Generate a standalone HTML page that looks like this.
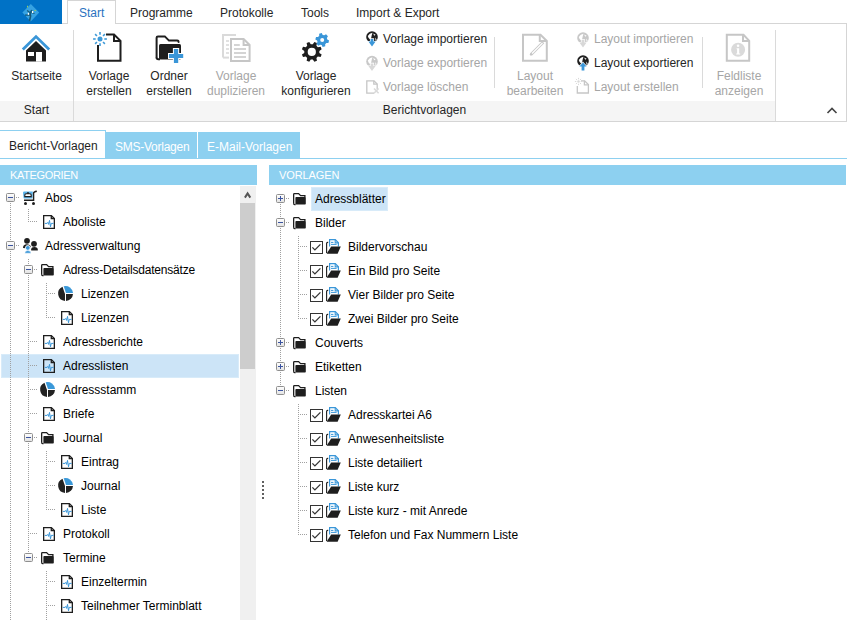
<!DOCTYPE html>
<html><head><meta charset="utf-8">
<style>
*{margin:0;padding:0;box-sizing:border-box}
html,body{width:847px;height:620px;overflow:hidden;background:#fff}
body{position:relative;font-family:"Liberation Sans",sans-serif;font-size:12px;color:#262626}
.a{position:absolute}
.t{position:absolute;white-space:nowrap;line-height:15px}
.c{text-align:center}
.dis{color:#a6a6a6}
svg{position:absolute;overflow:visible}
.band{position:absolute;background:#8dd0f0;color:#fff}
.vl{position:absolute;width:1px;background:#dadada}
</style></head><body>

<!-- logo -->
<div class="a" style="left:0;top:0;width:62px;height:24px;background:#0072c6;z-index:5"></div>
<svg style="left:0;top:0;z-index:6" width="62" height="24" viewBox="0 0 62 24">
  <path d="M30.8 4 L39.2 12.6 L30.8 21.4 L22.4 12.6 Z" fill="#36a2e2"/>
  <path d="M29.5 21 L30.6 16 L30 13.5 L31.8 10" stroke="#175a78" stroke-width="1.6" fill="none"/>
  <path d="M30.4 15 L25 15.2 M31 13.5 L27.2 10.5 M31.5 12.5 L34.5 13.5" stroke="#175a78" stroke-width="1.3" fill="none"/>
  <rect x="27.8" y="12.8" width="1.3" height="2" fill="#fff"/><rect x="32" y="11" width="1.3" height="2" fill="#fff"/>
  <rect x="27" y="5.8" width="1" height="1.6" fill="#9ccf5a"/><rect x="34.5" y="10" width="1.4" height="1" fill="#9ccf5a"/>
</svg>

<!-- tab row -->
<div class="a" style="left:67px;top:0px;width:49px;height:24px;border:1px solid #d5d5d5;border-bottom:none;background:#fff;z-index:2"></div>
<div class="t" style="left:79px;top:6px;color:#2a72c0;z-index:3">Start</div>
<div class="t" style="left:130px;top:6px">Programme</div>
<div class="t" style="left:220px;top:6px">Protokolle</div>
<div class="t" style="left:301px;top:6px">Tools</div>
<div class="t" style="left:356px;top:6px">Import &amp; Export</div>

<!-- ribbon box -->
<div class="a" style="left:0;top:23px;width:847px;height:99px;border-top:1px solid #d5d5d5;border-right:1px solid #d5d5d5;border-bottom:1px solid #d5d5d5;z-index:1"></div>
<div class="a" style="left:0;top:101px;width:775px;height:20px;background:#f5f5f5"></div>
<div class="vl" style="left:73px;top:30px;height:91px"></div>
<div class="vl" style="left:775px;top:30px;height:91px"></div>
<div class="vl" style="left:494px;top:37px;height:51px"></div>
<div class="vl" style="left:702px;top:37px;height:51px"></div>
<div class="t c" style="left:0;top:103px;width:73px">Start</div>
<div class="t c" style="left:74px;top:103px;width:701px">Berichtvorlagen</div>
<svg style="left:826px;top:106px" width="12" height="8" viewBox="0 0 12 8"><path d="M1.5 7 L6 2.5 L10.5 7" stroke="#444" stroke-width="1.6" fill="none"/></svg>

<!-- ribbon icons -->
<svg style="left:0;top:0;z-index:4" width="847" height="125" viewBox="0 0 847 125">
<path d="M22.8 49.5 L36 36.6 L49.2 49.5" fill="none" stroke="#3a96d8" stroke-width="2.8"/>
<path d="M26 50.6 L36 40.9 L46 50.6 V61.6 H26 Z" fill="#1e1e1e"/>
<rect x="28" y="52" width="6" height="4" fill="#fff"/><rect x="36" y="52" width="6" height="9.6" fill="#fff"/>
<path d="M98 45 V60.8 H120.5 V40.8 L114 34.5 H106" fill="none" stroke="#1e1e1e" stroke-width="2"/>
<path d="M114 34.5 V41 H120.5" fill="none" stroke="#1e1e1e" stroke-width="2"/>
<circle cx="100" cy="39" r="2.5" fill="#3d9ad9"/><path d="M104.30 39.00 L106.90 39.00" stroke="#3d9ad9" stroke-width="1.6"/><path d="M103.04 42.04 L104.88 43.88" stroke="#3d9ad9" stroke-width="1.6"/><path d="M100.00 43.30 L100.00 45.90" stroke="#3d9ad9" stroke-width="1.6"/><path d="M96.96 42.04 L95.12 43.88" stroke="#3d9ad9" stroke-width="1.6"/><path d="M95.70 39.00 L93.10 39.00" stroke="#3d9ad9" stroke-width="1.6"/><path d="M96.96 35.96 L95.12 34.12" stroke="#3d9ad9" stroke-width="1.6"/><path d="M100.00 34.70 L100.00 32.10" stroke="#3d9ad9" stroke-width="1.6"/><path d="M103.04 35.96 L104.88 34.12" stroke="#3d9ad9" stroke-width="1.6"/>
<path d="M156.6 57.5 V37.8 Q156.6 36.4 158 36.4 H164.8 L169 40.6 H177.2 Q178.6 40.6 178.6 42" fill="none" stroke="#1e1e1e" stroke-width="2" stroke-linecap="round"/>
<path d="M156.6 57.5 Q156.6 59.2 158.4 59.2 H160" fill="none" stroke="#1e1e1e" stroke-width="2"/>
<rect x="159" y="44" width="22" height="15.6" rx="1.5" fill="#1e1e1e"/>
<path d="M173.9 49 H178.2 V54 H183.2 V58 H178.2 V62.9 H173.9 V58 H169 V54 H173.9 Z" fill="#3a96d8" stroke="#fff" stroke-width="2" paint-order="stroke"/>
<path d="M223 57.6 V35 H236" fill="none" stroke="#dadada" stroke-width="2"/>
<path d="M223 57.6 H229" fill="none" stroke="#dadada" stroke-width="2"/>
<path d="M226 41 H229" stroke="#dadada" stroke-width="1.6"/>
<path d="M226 45 H229" stroke="#dadada" stroke-width="1.6"/>
<path d="M226 49 H229" stroke="#dadada" stroke-width="1.6"/>
<path d="M226 53 H229" stroke="#dadada" stroke-width="1.6"/>
<path d="M231 39 H243.6 L249.6 45 V61 H231 Z" fill="#fff" stroke="#c6c6c6" stroke-width="2"/>
<path d="M243.6 39 V45 H249.6" fill="none" stroke="#c6c6c6" stroke-width="2"/>
<path d="M234 45 H239.8 M234 49 H246 M234 53 H246 M234 57 H246" stroke="#c6c6c6" stroke-width="1.6"/>
<path d="M319.33 52.91 L321.68 54.45 L320.59 57.08 L317.84 56.52 L316.42 57.94 L316.98 60.69 L314.35 61.78 L312.81 59.43 L310.79 59.43 L309.25 61.78 L306.62 60.69 L307.18 57.94 L305.76 56.52 L303.01 57.08 L301.92 54.45 L304.27 52.91 L304.27 50.89 L301.92 49.35 L303.01 46.72 L305.76 47.28 L307.18 45.86 L306.62 43.11 L309.25 42.02 L310.79 44.37 L312.81 44.37 L314.35 42.02 L316.98 43.11 L316.42 45.86 L317.84 47.28 L320.59 46.72 L321.68 49.35 L319.33 50.89 Z M315.90 51.90 A4.1 4.1 0 1 0 307.70 51.90 A4.1 4.1 0 1 0 315.90 51.90 Z" fill="#1e1e1e" fill-rule="evenodd"/>
<path d="M319.23 35.85 L319.13 33.82 L321.77 33.11 L322.70 34.92 L324.30 35.35 L326.01 34.25 L327.95 36.19 L326.85 37.90 L327.28 39.50 L329.09 40.43 L328.38 43.07 L326.35 42.97 L325.17 44.15 L325.27 46.18 L322.63 46.89 L321.70 45.08 L320.10 44.65 L318.39 45.75 L316.45 43.81 L317.55 42.10 L317.12 40.50 L315.31 39.57 L316.02 36.93 L318.05 37.03 Z M324.20 40.00 A2.0 2.0 0 1 0 320.20 40.00 A2.0 2.0 0 1 0 324.20 40.00 Z" fill="#3a96d8" fill-rule="evenodd"/>
<circle cx="372" cy="37" r="5.8" fill="#1e1e1e"/><path d="M367.8 36 Q369.5 33.2 372.5 32.8 L371.8 35 Q371.2 38.5 370.5 39.8 Q368.2 38.5 367.8 36 Z" fill="#fff"/><path d="M373.2 33.4 L375.6 34.8 L374.2 35.8 Z" fill="#fff"/><path d="M375.2 37.5 L376.6 39.6 L375.6 41 Z" fill="#fff"/><path d="M370.6 39 H373.4 V41.6 H375.6 L372 46.6 L368.4 41.6 H370.6 Z" fill="#3a96d8" stroke="#fff" stroke-width="1.4" paint-order="stroke"/>
<circle cx="372" cy="61.5" r="5.8" fill="#c8c8c8"/><path d="M367.8 60.5 Q369.5 57.7 372.5 57.3 L371.8 59.5 Q371.2 63.0 370.5 64.3 Q368.2 63.0 367.8 60.5 Z" fill="#fff"/><path d="M373.2 57.9 L375.6 59.3 L374.2 60.3 Z" fill="#fff"/><path d="M375.2 62.0 L376.6 64.1 L375.6 65.5 Z" fill="#fff"/><path d="M370.6 63.5 H373.4 V66.1 H375.6 L372 71.1 L368.4 66.1 H370.6 Z" fill="#d8d8d8" stroke="#fff" stroke-width="1.4" paint-order="stroke"/>
<path d="M374 93.2 H366.8 V80.8 H374 L377.2 84 V89" fill="none" stroke="#c6c6c6" stroke-width="1.3"/>
<path d="M373.8 80.8 V84.2 H377.2" fill="none" stroke="#c6c6c6" stroke-width="1.3"/>
<path d="M374 88.5 L378.6 93.3 M378.6 88.5 L374 93.3" stroke="#dadada" stroke-width="1.6"/>
<path d="M523 34.8 H540.5 L546.8 41 V60.8 H523 Z" fill="#fff" stroke="#c6c6c6" stroke-width="2"/>
<path d="M539.8 34.8 V41 H546.8" fill="none" stroke="#c6c6c6" stroke-width="2"/>
<path d="M531 54.5 L543.2 42.3" stroke="#c6c6c6" stroke-width="3"/><path d="M532 53.5 L542.5 43" stroke="#fff" stroke-width="1.2"/><path d="M530.3 55.2 L531.6 53.9" stroke="#c6c6c6" stroke-width="2"/>
<circle cx="583" cy="38" r="5.8" fill="#c8c8c8"/><path d="M578.8 37 Q580.5 34.2 583.5 33.8 L582.8 36 Q582.2 39.5 581.5 40.8 Q579.2 39.5 578.8 37 Z" fill="#fff"/><path d="M584.2 34.4 L586.6 35.8 L585.2 36.8 Z" fill="#fff"/><path d="M586.2 38.5 L587.6 40.6 L586.6 42 Z" fill="#fff"/><path d="M581.6 40 H584.4 V42.6 H586.6 L583 47.6 L579.4 42.6 H581.6 Z" fill="#d8d8d8" stroke="#fff" stroke-width="1.4" paint-order="stroke"/>
<circle cx="583" cy="61" r="5.8" fill="#1e1e1e"/><path d="M578.8 60 Q580.5 57.2 583.5 56.8 L582.8 59 Q582.2 62.5 581.5 63.8 Q579.2 62.5 578.8 60 Z" fill="#fff"/><path d="M584.2 57.4 L586.6 58.8 L585.2 59.8 Z" fill="#fff"/><path d="M586.2 61.5 L587.6 63.6 L586.6 65 Z" fill="#fff"/><path d="M583 62.6 L586.6 66.6 H584.4 V70.4 H581.6 V66.6 H579.4 Z" fill="#3a96d8" stroke="#fff" stroke-width="1.4" paint-order="stroke"/>
<path d="M581 80.8 H584.6 L588.4 84.6 V93 H577.3 V86" fill="none" stroke="#c6c6c6" stroke-width="1.3"/>
<path d="M584.4 80.8 V84.8 H588.4" fill="none" stroke="#c6c6c6" stroke-width="1.3"/>
<circle cx="578.5" cy="81.5" r="1.2" fill="#dadada"/><path d="M580.70 81.50 L582.10 81.50" stroke="#dadada" stroke-width="1"/><path d="M580.06 83.06 L581.05 84.05" stroke="#dadada" stroke-width="1"/><path d="M578.50 83.70 L578.50 85.10" stroke="#dadada" stroke-width="1"/><path d="M576.94 83.06 L575.95 84.05" stroke="#dadada" stroke-width="1"/><path d="M576.30 81.50 L574.90 81.50" stroke="#dadada" stroke-width="1"/><path d="M576.94 79.94 L575.95 78.95" stroke="#dadada" stroke-width="1"/><path d="M578.50 79.30 L578.50 77.90" stroke="#dadada" stroke-width="1"/><path d="M580.06 79.94 L581.05 78.95" stroke="#dadada" stroke-width="1"/>
<path d="M726.8 34.8 H743.5 L749.2 40.8 V60.8 H726.8 Z" fill="#fff" stroke="#c6c6c6" stroke-width="2"/>
<path d="M743 34.8 V41 H749.2" fill="none" stroke="#c6c6c6" stroke-width="2"/>
<circle cx="738.1" cy="49.8" r="7" fill="#dadada"/>
<circle cx="738.1" cy="45.8" r="1.3" fill="#fff"/><path d="M736.6 48.2 H739.2 V53.5 H740.2 V54.6 H736.2 V53.5 H737.1 V49.3 H736.6 Z" fill="#fff"/>
</svg>
<!-- /ribbon icons -->
<!-- big buttons -->
<div class="t c" style="left:0;top:69px;width:73px">Startseite</div>
<div class="t c" style="left:74px;top:69px;width:70px">Vorlage<br>erstellen</div>
<div class="t c" style="left:134px;top:69px;width:70px">Ordner<br>erstellen</div>
<div class="t c dis" style="left:200px;top:69px;width:72px">Vorlage<br>duplizieren</div>
<div class="t c" style="left:276px;top:69px;width:80px">Vorlage<br>konfigurieren</div>
<div class="t c dis" style="left:500px;top:69px;width:70px">Layout<br>bearbeiten</div>
<div class="t c dis" style="left:704px;top:69px;width:70px">Feldliste<br>anzeigen</div>

<!-- small buttons -->
<div class="t" style="left:383px;top:32px">Vorlage importieren</div>
<div class="t dis" style="left:383px;top:56px">Vorlage exportieren</div>
<div class="t dis" style="left:383px;top:80px">Vorlage löschen</div>
<div class="t dis" style="left:594px;top:32px">Layout importieren</div>
<div class="t" style="left:594px;top:56px">Layout exportieren</div>
<div class="t dis" style="left:594px;top:80px">Layout erstellen</div>

<!-- sub tabs -->
<div class="a" style="left:-1px;top:130px;width:107px;height:29px;border:1px solid #8dd0f0;border-bottom:none;background:#fff"></div>
<div class="t" style="left:9px;top:139px;color:#1e1e1e">Bericht-Vorlagen</div>
<div class="band" style="left:106px;top:132px;width:91px;height:26px"></div>
<div class="band" style="left:198px;top:132px;width:102px;height:26px"></div>
<div class="t" style="left:115px;top:140px;color:#fff;letter-spacing:-0.25px">SMS-Vorlagen</div>
<div class="t" style="left:207px;top:140px;color:#fff">E-Mail-Vorlagen</div>
<div class="a" style="left:0;top:158px;width:847px;height:1px;background:#8dd0f0"></div>

<!-- bands -->
<div class="band" style="left:0;top:165px;width:257px;height:20px"></div>
<div class="t" style="left:10px;top:168px;color:#fff;font-size:11px;letter-spacing:-0.35px">KATEGORIEN</div>
<div class="band" style="left:269px;top:165px;width:577px;height:20px"></div>
<div class="t" style="left:279px;top:168px;color:#fff;font-size:11px;letter-spacing:-0.1px">VORLAGEN</div>

<!-- scrollbar -->
<div class="a" style="left:240px;top:186px;width:16px;height:434px;background:#f0f0f0"></div>
<div class="a" style="left:240px;top:203px;width:15px;height:166px;background:#cdcdcd"></div>
<svg style="left:240px;top:186px" width="16" height="16" viewBox="0 0 16 16"><path d="M4.9 11.6 L7.6 7.4 L10.3 11.6" stroke="#555" stroke-width="2" fill="none"/></svg>

<!-- splitter -->
<div class="a" style="left:262px;top:481px;width:2px;height:2px;background:#606060"></div>
<div class="a" style="left:262px;top:485px;width:2px;height:2px;background:#606060"></div>
<div class="a" style="left:262px;top:489px;width:2px;height:2px;background:#606060"></div>
<div class="a" style="left:262px;top:493px;width:2px;height:2px;background:#606060"></div>
<div class="a" style="left:262px;top:497px;width:2px;height:2px;background:#606060"></div>

<!-- selection -->
<div class="a" style="left:1px;top:354px;width:238px;height:24px;background:#cce4f7;box-shadow:inset 0 0 0 1px #d8ebf9"></div>
<div class="a" style="left:311px;top:187px;width:77px;height:24px;background:#cce4f7;box-shadow:inset 0 0 0 1px #d8ebf9"></div>

<div class="a" style="left:10px;top:203px;width:1px;height:417px;background:repeating-linear-gradient(180deg,#a0a0a0 0 1px,transparent 1px 2px)"></div>
<div class="a" style="left:28px;top:209px;width:1px;height:13px;background:repeating-linear-gradient(180deg,#a0a0a0 0 1px,transparent 1px 2px)"></div>
<div class="a" style="left:28px;top:259px;width:1px;height:294px;background:repeating-linear-gradient(180deg,#a0a0a0 0 1px,transparent 1px 2px)"></div>
<div class="a" style="left:46px;top:283px;width:1px;height:35px;background:repeating-linear-gradient(180deg,#a0a0a0 0 1px,transparent 1px 2px)"></div>
<div class="a" style="left:46px;top:451px;width:1px;height:59px;background:repeating-linear-gradient(180deg,#a0a0a0 0 1px,transparent 1px 2px)"></div>
<div class="a" style="left:46px;top:571px;width:1px;height:49px;background:repeating-linear-gradient(180deg,#a0a0a0 0 1px,transparent 1px 2px)"></div>
<div class="a" style="left:280px;top:204px;width:1px;height:182px;background:repeating-linear-gradient(180deg,#a0a0a0 0 1px,transparent 1px 2px)"></div>
<div class="a" style="left:298px;top:236px;width:1px;height:83px;background:repeating-linear-gradient(180deg,#a0a0a0 0 1px,transparent 1px 2px)"></div>
<div class="a" style="left:298px;top:404px;width:1px;height:131px;background:repeating-linear-gradient(180deg,#a0a0a0 0 1px,transparent 1px 2px)"></div>
<svg style="left:6px;top:193px" width="9" height="9" viewBox="0 0 9 9"><defs><linearGradient id="eg" x1="0" y1="0" x2="0" y2="1"><stop offset="0" stop-color="#fff"/><stop offset="1" stop-color="#e2e2e2"/></linearGradient></defs><rect x="0.5" y="0.5" width="8" height="8" rx="1" fill="url(#eg)" stroke="#8f8f8f" stroke-width="1"/><path d="M2 4.5 H7" stroke="#3b54a0" stroke-width="1"/></svg>
<div class="a" style="left:16px;top:197px;width:4px;height:1px;background:repeating-linear-gradient(90deg,#a0a0a0 0 1px,transparent 1px 2px)"></div>
<svg style="left:22px;top:190px" width="16" height="16" viewBox="0 0 16 16"><path d="M1 2.8 Q1 1.6 2.2 1.6 H10.8 L10.6 7.4 Q10.5 8.6 9.3 8.6 H2.8 Q1.6 8.6 1.5 7.4 Z" fill="#5ab3ec"/><path d="M2.8 6.6 V5.2 Q2.8 3.8 4.2 3.8 H7.8 Q9.2 3.8 9.2 5.2 V6.6 Z" fill="#fff" stroke="#1e1e1e" stroke-width="1.1"/><circle cx="6" cy="3" r="0.9" fill="#1e1e1e"/><path d="M2 10.3 H11.6 V3.2 Q11.8 1.8 14.8 1.3" fill="none" stroke="#1e1e1e" stroke-width="1.4"/><circle cx="3.5" cy="13.5" r="1.5" fill="#1e1e1e"/><circle cx="11.5" cy="13.5" r="1.5" fill="#1e1e1e"/></svg>
<div class="t" style="left:45px;top:191px;color:#000">Abos</div>
<div class="a" style="left:30px;top:221px;width:8px;height:1px;background:repeating-linear-gradient(90deg,#a0a0a0 0 1px,transparent 1px 2px)"></div>
<svg style="left:43px;top:215px" width="13" height="15" viewBox="0 0 13 15"><path d="M0.65 0.65 H8.4 L11.35 3.6 V13.35 H0.65 Z" fill="none" stroke="#1e1e1e" stroke-width="1.3"/><path d="M8.3 0.65 V3.7 H11.35" fill="none" stroke="#1e1e1e" stroke-width="1.3"/><path d="M1.8 8.4 H4 L4.8 7.4 L5.6 9.4 L6.5 5.4 L7.5 11.8 L8.2 8.4 H10.6" fill="none" stroke="#3a96d8" stroke-width="1"/></svg>
<div class="t" style="left:63px;top:215px;color:#000">Aboliste</div>
<svg style="left:6px;top:241px" width="9" height="9" viewBox="0 0 9 9"><defs><linearGradient id="eg" x1="0" y1="0" x2="0" y2="1"><stop offset="0" stop-color="#fff"/><stop offset="1" stop-color="#e2e2e2"/></linearGradient></defs><rect x="0.5" y="0.5" width="8" height="8" rx="1" fill="url(#eg)" stroke="#8f8f8f" stroke-width="1"/><path d="M2 4.5 H7" stroke="#3b54a0" stroke-width="1"/></svg>
<div class="a" style="left:16px;top:245px;width:4px;height:1px;background:repeating-linear-gradient(90deg,#a0a0a0 0 1px,transparent 1px 2px)"></div>
<svg style="left:22px;top:238px" width="16" height="16" viewBox="0 0 16 16"><circle cx="5" cy="2.8" r="2.9" fill="#1e1e1e"/><path d="M1 10 Q1 6.3 4.8 6.3 Q8.2 6.3 8.9 8.8 L7 10.5 Z" fill="#1e1e1e"/><circle cx="12" cy="5.8" r="2.9" fill="#1e1e1e"/><path d="M9.2 12.6 V11.2 Q9.4 9 12.4 9 Q15.8 9.2 15.8 11.5 V12.6 Z" fill="#1e1e1e"/><circle cx="5.8" cy="9.9" r="2.4" fill="#3a96d8" stroke="#fff" stroke-width="0.9"/><path d="M2.8 15.2 Q3 12.6 5.8 12.6 Q8.8 12.6 9 15.2 Z" fill="#3a96d8" stroke="#fff" stroke-width="0.5"/></svg>
<div class="t" style="left:45px;top:239px;color:#000">Adressverwaltung</div>
<svg style="left:24px;top:265px" width="9" height="9" viewBox="0 0 9 9"><defs><linearGradient id="eg" x1="0" y1="0" x2="0" y2="1"><stop offset="0" stop-color="#fff"/><stop offset="1" stop-color="#e2e2e2"/></linearGradient></defs><rect x="0.5" y="0.5" width="8" height="8" rx="1" fill="url(#eg)" stroke="#8f8f8f" stroke-width="1"/><path d="M2 4.5 H7" stroke="#3b54a0" stroke-width="1"/></svg>
<div class="a" style="left:34px;top:269px;width:4px;height:1px;background:repeating-linear-gradient(90deg,#a0a0a0 0 1px,transparent 1px 2px)"></div>
<svg style="left:41px;top:264px" width="14" height="13" viewBox="0 0 14 13"><path d="M0.65 10.8 V1.4 Q0.65 0.65 1.4 0.65 H5.6 L7.6 2.65 H11.9 V4.2" fill="none" stroke="#1e1e1e" stroke-width="1.3"/><path d="M0.65 10.6 Q0.65 11.55 1.6 11.55 H2.6" fill="none" stroke="#1e1e1e" stroke-width="1.3"/><rect x="2.4" y="4" width="10.4" height="7.6" rx="0.8" fill="#1e1e1e"/></svg>
<div class="t" style="left:63px;top:263px;color:#000;letter-spacing:-0.2px">Adress-Detailsdatensätze</div>
<div class="a" style="left:48px;top:293px;width:8px;height:1px;background:repeating-linear-gradient(90deg,#a0a0a0 0 1px,transparent 1px 2px)"></div>
<svg style="left:58px;top:286px" width="16" height="16" viewBox="0 0 16 16"><path d="M7 7.9 L4.5 0.7 A7.5 7.5 0 0 0 7 15 Z" fill="#222"/><path d="M8 8 H15 A7.5 7.5 0 0 1 8 15 Z" fill="#222"/><path d="M8 7 L5.7 0.25 A7.5 7.5 0 0 1 15 7 Z" fill="#3a98d8"/></svg>
<div class="t" style="left:81px;top:287px;color:#000">Lizenzen</div>
<div class="a" style="left:48px;top:317px;width:8px;height:1px;background:repeating-linear-gradient(90deg,#a0a0a0 0 1px,transparent 1px 2px)"></div>
<svg style="left:61px;top:311px" width="13" height="15" viewBox="0 0 13 15"><path d="M0.65 0.65 H8.4 L11.35 3.6 V13.35 H0.65 Z" fill="none" stroke="#1e1e1e" stroke-width="1.3"/><path d="M8.3 0.65 V3.7 H11.35" fill="none" stroke="#1e1e1e" stroke-width="1.3"/><path d="M1.8 8.4 H4 L4.8 7.4 L5.6 9.4 L6.5 5.4 L7.5 11.8 L8.2 8.4 H10.6" fill="none" stroke="#3a96d8" stroke-width="1"/></svg>
<div class="t" style="left:81px;top:311px;color:#000">Lizenzen</div>
<div class="a" style="left:30px;top:341px;width:8px;height:1px;background:repeating-linear-gradient(90deg,#a0a0a0 0 1px,transparent 1px 2px)"></div>
<svg style="left:43px;top:335px" width="13" height="15" viewBox="0 0 13 15"><path d="M0.65 0.65 H8.4 L11.35 3.6 V13.35 H0.65 Z" fill="none" stroke="#1e1e1e" stroke-width="1.3"/><path d="M8.3 0.65 V3.7 H11.35" fill="none" stroke="#1e1e1e" stroke-width="1.3"/><path d="M1.8 8.4 H4 L4.8 7.4 L5.6 9.4 L6.5 5.4 L7.5 11.8 L8.2 8.4 H10.6" fill="none" stroke="#3a96d8" stroke-width="1"/></svg>
<div class="t" style="left:63px;top:335px;color:#000">Adressberichte</div>
<div class="a" style="left:30px;top:365px;width:8px;height:1px;background:repeating-linear-gradient(90deg,#a0a0a0 0 1px,transparent 1px 2px)"></div>
<svg style="left:43px;top:359px" width="13" height="15" viewBox="0 0 13 15"><path d="M0.65 0.65 H8.4 L11.35 3.6 V13.35 H0.65 Z" fill="none" stroke="#1e1e1e" stroke-width="1.3"/><path d="M8.3 0.65 V3.7 H11.35" fill="none" stroke="#1e1e1e" stroke-width="1.3"/><path d="M1.8 8.4 H4 L4.8 7.4 L5.6 9.4 L6.5 5.4 L7.5 11.8 L8.2 8.4 H10.6" fill="none" stroke="#3a96d8" stroke-width="1"/></svg>
<div class="t" style="left:63px;top:359px;color:#000">Adresslisten</div>
<div class="a" style="left:30px;top:389px;width:8px;height:1px;background:repeating-linear-gradient(90deg,#a0a0a0 0 1px,transparent 1px 2px)"></div>
<svg style="left:40px;top:382px" width="16" height="16" viewBox="0 0 16 16"><path d="M7 7.9 L4.5 0.7 A7.5 7.5 0 0 0 7 15 Z" fill="#222"/><path d="M8 8 H15 A7.5 7.5 0 0 1 8 15 Z" fill="#222"/><path d="M8 7 L5.7 0.25 A7.5 7.5 0 0 1 15 7 Z" fill="#3a98d8"/></svg>
<div class="t" style="left:63px;top:383px;color:#000">Adressstamm</div>
<div class="a" style="left:30px;top:413px;width:8px;height:1px;background:repeating-linear-gradient(90deg,#a0a0a0 0 1px,transparent 1px 2px)"></div>
<svg style="left:43px;top:407px" width="13" height="15" viewBox="0 0 13 15"><path d="M0.65 0.65 H8.4 L11.35 3.6 V13.35 H0.65 Z" fill="none" stroke="#1e1e1e" stroke-width="1.3"/><path d="M8.3 0.65 V3.7 H11.35" fill="none" stroke="#1e1e1e" stroke-width="1.3"/><path d="M1.8 8.4 H4 L4.8 7.4 L5.6 9.4 L6.5 5.4 L7.5 11.8 L8.2 8.4 H10.6" fill="none" stroke="#3a96d8" stroke-width="1"/></svg>
<div class="t" style="left:63px;top:407px;color:#000">Briefe</div>
<svg style="left:24px;top:433px" width="9" height="9" viewBox="0 0 9 9"><defs><linearGradient id="eg" x1="0" y1="0" x2="0" y2="1"><stop offset="0" stop-color="#fff"/><stop offset="1" stop-color="#e2e2e2"/></linearGradient></defs><rect x="0.5" y="0.5" width="8" height="8" rx="1" fill="url(#eg)" stroke="#8f8f8f" stroke-width="1"/><path d="M2 4.5 H7" stroke="#3b54a0" stroke-width="1"/></svg>
<div class="a" style="left:34px;top:437px;width:4px;height:1px;background:repeating-linear-gradient(90deg,#a0a0a0 0 1px,transparent 1px 2px)"></div>
<svg style="left:41px;top:432px" width="14" height="13" viewBox="0 0 14 13"><path d="M0.65 10.8 V1.4 Q0.65 0.65 1.4 0.65 H5.6 L7.6 2.65 H11.9 V4.2" fill="none" stroke="#1e1e1e" stroke-width="1.3"/><path d="M0.65 10.6 Q0.65 11.55 1.6 11.55 H2.6" fill="none" stroke="#1e1e1e" stroke-width="1.3"/><rect x="2.4" y="4" width="10.4" height="7.6" rx="0.8" fill="#1e1e1e"/></svg>
<div class="t" style="left:63px;top:431px;color:#000">Journal</div>
<div class="a" style="left:48px;top:461px;width:8px;height:1px;background:repeating-linear-gradient(90deg,#a0a0a0 0 1px,transparent 1px 2px)"></div>
<svg style="left:61px;top:455px" width="13" height="15" viewBox="0 0 13 15"><path d="M0.65 0.65 H8.4 L11.35 3.6 V13.35 H0.65 Z" fill="none" stroke="#1e1e1e" stroke-width="1.3"/><path d="M8.3 0.65 V3.7 H11.35" fill="none" stroke="#1e1e1e" stroke-width="1.3"/><path d="M1.8 8.4 H4 L4.8 7.4 L5.6 9.4 L6.5 5.4 L7.5 11.8 L8.2 8.4 H10.6" fill="none" stroke="#3a96d8" stroke-width="1"/></svg>
<div class="t" style="left:81px;top:455px;color:#000">Eintrag</div>
<div class="a" style="left:48px;top:485px;width:8px;height:1px;background:repeating-linear-gradient(90deg,#a0a0a0 0 1px,transparent 1px 2px)"></div>
<svg style="left:58px;top:478px" width="16" height="16" viewBox="0 0 16 16"><path d="M7 7.9 L4.5 0.7 A7.5 7.5 0 0 0 7 15 Z" fill="#222"/><path d="M8 8 H15 A7.5 7.5 0 0 1 8 15 Z" fill="#222"/><path d="M8 7 L5.7 0.25 A7.5 7.5 0 0 1 15 7 Z" fill="#3a98d8"/></svg>
<div class="t" style="left:81px;top:479px;color:#000">Journal</div>
<div class="a" style="left:48px;top:509px;width:8px;height:1px;background:repeating-linear-gradient(90deg,#a0a0a0 0 1px,transparent 1px 2px)"></div>
<svg style="left:61px;top:503px" width="13" height="15" viewBox="0 0 13 15"><path d="M0.65 0.65 H8.4 L11.35 3.6 V13.35 H0.65 Z" fill="none" stroke="#1e1e1e" stroke-width="1.3"/><path d="M8.3 0.65 V3.7 H11.35" fill="none" stroke="#1e1e1e" stroke-width="1.3"/><path d="M1.8 8.4 H4 L4.8 7.4 L5.6 9.4 L6.5 5.4 L7.5 11.8 L8.2 8.4 H10.6" fill="none" stroke="#3a96d8" stroke-width="1"/></svg>
<div class="t" style="left:81px;top:503px;color:#000">Liste</div>
<div class="a" style="left:30px;top:533px;width:8px;height:1px;background:repeating-linear-gradient(90deg,#a0a0a0 0 1px,transparent 1px 2px)"></div>
<svg style="left:43px;top:527px" width="13" height="15" viewBox="0 0 13 15"><path d="M0.65 0.65 H8.4 L11.35 3.6 V13.35 H0.65 Z" fill="none" stroke="#1e1e1e" stroke-width="1.3"/><path d="M8.3 0.65 V3.7 H11.35" fill="none" stroke="#1e1e1e" stroke-width="1.3"/><path d="M1.8 8.4 H4 L4.8 7.4 L5.6 9.4 L6.5 5.4 L7.5 11.8 L8.2 8.4 H10.6" fill="none" stroke="#3a96d8" stroke-width="1"/></svg>
<div class="t" style="left:63px;top:527px;color:#000">Protokoll</div>
<svg style="left:24px;top:553px" width="9" height="9" viewBox="0 0 9 9"><defs><linearGradient id="eg" x1="0" y1="0" x2="0" y2="1"><stop offset="0" stop-color="#fff"/><stop offset="1" stop-color="#e2e2e2"/></linearGradient></defs><rect x="0.5" y="0.5" width="8" height="8" rx="1" fill="url(#eg)" stroke="#8f8f8f" stroke-width="1"/><path d="M2 4.5 H7" stroke="#3b54a0" stroke-width="1"/></svg>
<div class="a" style="left:34px;top:557px;width:4px;height:1px;background:repeating-linear-gradient(90deg,#a0a0a0 0 1px,transparent 1px 2px)"></div>
<svg style="left:41px;top:552px" width="14" height="13" viewBox="0 0 14 13"><path d="M0.65 10.8 V1.4 Q0.65 0.65 1.4 0.65 H5.6 L7.6 2.65 H11.9 V4.2" fill="none" stroke="#1e1e1e" stroke-width="1.3"/><path d="M0.65 10.6 Q0.65 11.55 1.6 11.55 H2.6" fill="none" stroke="#1e1e1e" stroke-width="1.3"/><rect x="2.4" y="4" width="10.4" height="7.6" rx="0.8" fill="#1e1e1e"/></svg>
<div class="t" style="left:63px;top:551px;color:#000">Termine</div>
<div class="a" style="left:48px;top:581px;width:8px;height:1px;background:repeating-linear-gradient(90deg,#a0a0a0 0 1px,transparent 1px 2px)"></div>
<svg style="left:61px;top:575px" width="13" height="15" viewBox="0 0 13 15"><path d="M0.65 0.65 H8.4 L11.35 3.6 V13.35 H0.65 Z" fill="none" stroke="#1e1e1e" stroke-width="1.3"/><path d="M8.3 0.65 V3.7 H11.35" fill="none" stroke="#1e1e1e" stroke-width="1.3"/><path d="M1.8 8.4 H4 L4.8 7.4 L5.6 9.4 L6.5 5.4 L7.5 11.8 L8.2 8.4 H10.6" fill="none" stroke="#3a96d8" stroke-width="1"/></svg>
<div class="t" style="left:81px;top:575px;color:#000">Einzeltermin</div>
<div class="a" style="left:48px;top:605px;width:8px;height:1px;background:repeating-linear-gradient(90deg,#a0a0a0 0 1px,transparent 1px 2px)"></div>
<svg style="left:61px;top:599px" width="13" height="15" viewBox="0 0 13 15"><path d="M0.65 0.65 H8.4 L11.35 3.6 V13.35 H0.65 Z" fill="none" stroke="#1e1e1e" stroke-width="1.3"/><path d="M8.3 0.65 V3.7 H11.35" fill="none" stroke="#1e1e1e" stroke-width="1.3"/><path d="M1.8 8.4 H4 L4.8 7.4 L5.6 9.4 L6.5 5.4 L7.5 11.8 L8.2 8.4 H10.6" fill="none" stroke="#3a96d8" stroke-width="1"/></svg>
<div class="t" style="left:81px;top:599px;color:#000">Teilnehmer Terminblatt</div>
<div class="a" style="left:48px;top:629px;width:8px;height:1px;background:repeating-linear-gradient(90deg,#a0a0a0 0 1px,transparent 1px 2px)"></div>
<svg style="left:61px;top:623px" width="13" height="15" viewBox="0 0 13 15"><path d="M0.65 0.65 H8.4 L11.35 3.6 V13.35 H0.65 Z" fill="none" stroke="#1e1e1e" stroke-width="1.3"/><path d="M8.3 0.65 V3.7 H11.35" fill="none" stroke="#1e1e1e" stroke-width="1.3"/><path d="M1.8 8.4 H4 L4.8 7.4 L5.6 9.4 L6.5 5.4 L7.5 11.8 L8.2 8.4 H10.6" fill="none" stroke="#3a96d8" stroke-width="1"/></svg>
<svg style="left:276px;top:194px" width="9" height="9" viewBox="0 0 9 9"><defs><linearGradient id="eg" x1="0" y1="0" x2="0" y2="1"><stop offset="0" stop-color="#fff"/><stop offset="1" stop-color="#e2e2e2"/></linearGradient></defs><rect x="0.5" y="0.5" width="8" height="8" rx="1" fill="url(#eg)" stroke="#8f8f8f" stroke-width="1"/><path d="M2 4.5 H7" stroke="#3b54a0" stroke-width="1"/><path d="M4.5 2 V7" stroke="#3b54a0" stroke-width="1"/></svg>
<div class="a" style="left:286px;top:198px;width:4px;height:1px;background:repeating-linear-gradient(90deg,#a0a0a0 0 1px,transparent 1px 2px)"></div>
<svg style="left:293px;top:193px" width="14" height="13" viewBox="0 0 14 13"><path d="M0.65 10.8 V1.4 Q0.65 0.65 1.4 0.65 H5.6 L7.6 2.65 H11.9 V4.2" fill="none" stroke="#1e1e1e" stroke-width="1.3"/><path d="M0.65 10.6 Q0.65 11.55 1.6 11.55 H2.6" fill="none" stroke="#1e1e1e" stroke-width="1.3"/><rect x="2.4" y="4" width="10.4" height="7.6" rx="0.8" fill="#1e1e1e"/></svg>
<div class="t" style="left:315px;top:192px;color:#000">Adressblätter</div>
<svg style="left:276px;top:218px" width="9" height="9" viewBox="0 0 9 9"><defs><linearGradient id="eg" x1="0" y1="0" x2="0" y2="1"><stop offset="0" stop-color="#fff"/><stop offset="1" stop-color="#e2e2e2"/></linearGradient></defs><rect x="0.5" y="0.5" width="8" height="8" rx="1" fill="url(#eg)" stroke="#8f8f8f" stroke-width="1"/><path d="M2 4.5 H7" stroke="#3b54a0" stroke-width="1"/></svg>
<div class="a" style="left:286px;top:222px;width:4px;height:1px;background:repeating-linear-gradient(90deg,#a0a0a0 0 1px,transparent 1px 2px)"></div>
<svg style="left:293px;top:217px" width="14" height="13" viewBox="0 0 14 13"><path d="M0.65 10.8 V1.4 Q0.65 0.65 1.4 0.65 H5.6 L7.6 2.65 H11.9 V4.2" fill="none" stroke="#1e1e1e" stroke-width="1.3"/><path d="M0.65 10.6 Q0.65 11.55 1.6 11.55 H2.6" fill="none" stroke="#1e1e1e" stroke-width="1.3"/><rect x="2.4" y="4" width="10.4" height="7.6" rx="0.8" fill="#1e1e1e"/></svg>
<div class="t" style="left:315px;top:216px;color:#000">Bilder</div>
<div class="a" style="left:300px;top:246px;width:8px;height:1px;background:repeating-linear-gradient(90deg,#a0a0a0 0 1px,transparent 1px 2px)"></div>
<svg style="left:310px;top:241px" width="13" height="13" viewBox="0 0 13 13"><rect x="0.5" y="0.5" width="12" height="12" fill="#fff" stroke="#333" stroke-width="1"/><path d="M2.4 6.4 L4.9 8.9 L10.4 3.4" fill="none" stroke="#333" stroke-width="1.3"/></svg>
<svg style="left:325px;top:239px" width="16" height="16" viewBox="0 0 16 16"><path d="M4.6 7.5 V0.65 H10.3 L13.4 3.8 V7.5" fill="#fff" stroke="#3a96d8" stroke-width="1.2"/><path d="M10.2 0.7 V3.9 H13.4" fill="none" stroke="#3a96d8" stroke-width="1.1"/><path d="M6 3.4 H8.4 M6 5.4 H11.6" stroke="#3a96d8" stroke-width="1"/><path d="M1.6 14 V4.4 Q1.6 3.4 2.6 3.4 H3.2" fill="none" stroke="#1e1e1e" stroke-width="1.1"/><path d="M6.2 7.4 H15.8 L12.6 14.7 H1.6 Z" fill="#1e1e1e"/></svg>
<div class="t" style="left:348px;top:240px;color:#000">Bildervorschau</div>
<div class="a" style="left:300px;top:270px;width:8px;height:1px;background:repeating-linear-gradient(90deg,#a0a0a0 0 1px,transparent 1px 2px)"></div>
<svg style="left:310px;top:265px" width="13" height="13" viewBox="0 0 13 13"><rect x="0.5" y="0.5" width="12" height="12" fill="#fff" stroke="#333" stroke-width="1"/><path d="M2.4 6.4 L4.9 8.9 L10.4 3.4" fill="none" stroke="#333" stroke-width="1.3"/></svg>
<svg style="left:325px;top:263px" width="16" height="16" viewBox="0 0 16 16"><path d="M4.6 7.5 V0.65 H10.3 L13.4 3.8 V7.5" fill="#fff" stroke="#3a96d8" stroke-width="1.2"/><path d="M10.2 0.7 V3.9 H13.4" fill="none" stroke="#3a96d8" stroke-width="1.1"/><path d="M6 3.4 H8.4 M6 5.4 H11.6" stroke="#3a96d8" stroke-width="1"/><path d="M1.6 14 V4.4 Q1.6 3.4 2.6 3.4 H3.2" fill="none" stroke="#1e1e1e" stroke-width="1.1"/><path d="M6.2 7.4 H15.8 L12.6 14.7 H1.6 Z" fill="#1e1e1e"/></svg>
<div class="t" style="left:348px;top:264px;color:#000">Ein Bild pro Seite</div>
<div class="a" style="left:300px;top:294px;width:8px;height:1px;background:repeating-linear-gradient(90deg,#a0a0a0 0 1px,transparent 1px 2px)"></div>
<svg style="left:310px;top:289px" width="13" height="13" viewBox="0 0 13 13"><rect x="0.5" y="0.5" width="12" height="12" fill="#fff" stroke="#333" stroke-width="1"/><path d="M2.4 6.4 L4.9 8.9 L10.4 3.4" fill="none" stroke="#333" stroke-width="1.3"/></svg>
<svg style="left:325px;top:287px" width="16" height="16" viewBox="0 0 16 16"><path d="M4.6 7.5 V0.65 H10.3 L13.4 3.8 V7.5" fill="#fff" stroke="#3a96d8" stroke-width="1.2"/><path d="M10.2 0.7 V3.9 H13.4" fill="none" stroke="#3a96d8" stroke-width="1.1"/><path d="M6 3.4 H8.4 M6 5.4 H11.6" stroke="#3a96d8" stroke-width="1"/><path d="M1.6 14 V4.4 Q1.6 3.4 2.6 3.4 H3.2" fill="none" stroke="#1e1e1e" stroke-width="1.1"/><path d="M6.2 7.4 H15.8 L12.6 14.7 H1.6 Z" fill="#1e1e1e"/></svg>
<div class="t" style="left:348px;top:288px;color:#000">Vier Bilder pro Seite</div>
<div class="a" style="left:300px;top:318px;width:8px;height:1px;background:repeating-linear-gradient(90deg,#a0a0a0 0 1px,transparent 1px 2px)"></div>
<svg style="left:310px;top:313px" width="13" height="13" viewBox="0 0 13 13"><rect x="0.5" y="0.5" width="12" height="12" fill="#fff" stroke="#333" stroke-width="1"/><path d="M2.4 6.4 L4.9 8.9 L10.4 3.4" fill="none" stroke="#333" stroke-width="1.3"/></svg>
<svg style="left:325px;top:311px" width="16" height="16" viewBox="0 0 16 16"><path d="M4.6 7.5 V0.65 H10.3 L13.4 3.8 V7.5" fill="#fff" stroke="#3a96d8" stroke-width="1.2"/><path d="M10.2 0.7 V3.9 H13.4" fill="none" stroke="#3a96d8" stroke-width="1.1"/><path d="M6 3.4 H8.4 M6 5.4 H11.6" stroke="#3a96d8" stroke-width="1"/><path d="M1.6 14 V4.4 Q1.6 3.4 2.6 3.4 H3.2" fill="none" stroke="#1e1e1e" stroke-width="1.1"/><path d="M6.2 7.4 H15.8 L12.6 14.7 H1.6 Z" fill="#1e1e1e"/></svg>
<div class="t" style="left:348px;top:312px;color:#000">Zwei Bilder pro Seite</div>
<svg style="left:276px;top:338px" width="9" height="9" viewBox="0 0 9 9"><defs><linearGradient id="eg" x1="0" y1="0" x2="0" y2="1"><stop offset="0" stop-color="#fff"/><stop offset="1" stop-color="#e2e2e2"/></linearGradient></defs><rect x="0.5" y="0.5" width="8" height="8" rx="1" fill="url(#eg)" stroke="#8f8f8f" stroke-width="1"/><path d="M2 4.5 H7" stroke="#3b54a0" stroke-width="1"/><path d="M4.5 2 V7" stroke="#3b54a0" stroke-width="1"/></svg>
<div class="a" style="left:286px;top:342px;width:4px;height:1px;background:repeating-linear-gradient(90deg,#a0a0a0 0 1px,transparent 1px 2px)"></div>
<svg style="left:293px;top:337px" width="14" height="13" viewBox="0 0 14 13"><path d="M0.65 10.8 V1.4 Q0.65 0.65 1.4 0.65 H5.6 L7.6 2.65 H11.9 V4.2" fill="none" stroke="#1e1e1e" stroke-width="1.3"/><path d="M0.65 10.6 Q0.65 11.55 1.6 11.55 H2.6" fill="none" stroke="#1e1e1e" stroke-width="1.3"/><rect x="2.4" y="4" width="10.4" height="7.6" rx="0.8" fill="#1e1e1e"/></svg>
<div class="t" style="left:315px;top:336px;color:#000">Couverts</div>
<svg style="left:276px;top:362px" width="9" height="9" viewBox="0 0 9 9"><defs><linearGradient id="eg" x1="0" y1="0" x2="0" y2="1"><stop offset="0" stop-color="#fff"/><stop offset="1" stop-color="#e2e2e2"/></linearGradient></defs><rect x="0.5" y="0.5" width="8" height="8" rx="1" fill="url(#eg)" stroke="#8f8f8f" stroke-width="1"/><path d="M2 4.5 H7" stroke="#3b54a0" stroke-width="1"/><path d="M4.5 2 V7" stroke="#3b54a0" stroke-width="1"/></svg>
<div class="a" style="left:286px;top:366px;width:4px;height:1px;background:repeating-linear-gradient(90deg,#a0a0a0 0 1px,transparent 1px 2px)"></div>
<svg style="left:293px;top:361px" width="14" height="13" viewBox="0 0 14 13"><path d="M0.65 10.8 V1.4 Q0.65 0.65 1.4 0.65 H5.6 L7.6 2.65 H11.9 V4.2" fill="none" stroke="#1e1e1e" stroke-width="1.3"/><path d="M0.65 10.6 Q0.65 11.55 1.6 11.55 H2.6" fill="none" stroke="#1e1e1e" stroke-width="1.3"/><rect x="2.4" y="4" width="10.4" height="7.6" rx="0.8" fill="#1e1e1e"/></svg>
<div class="t" style="left:315px;top:360px;color:#000">Etiketten</div>
<svg style="left:276px;top:386px" width="9" height="9" viewBox="0 0 9 9"><defs><linearGradient id="eg" x1="0" y1="0" x2="0" y2="1"><stop offset="0" stop-color="#fff"/><stop offset="1" stop-color="#e2e2e2"/></linearGradient></defs><rect x="0.5" y="0.5" width="8" height="8" rx="1" fill="url(#eg)" stroke="#8f8f8f" stroke-width="1"/><path d="M2 4.5 H7" stroke="#3b54a0" stroke-width="1"/></svg>
<div class="a" style="left:286px;top:390px;width:4px;height:1px;background:repeating-linear-gradient(90deg,#a0a0a0 0 1px,transparent 1px 2px)"></div>
<svg style="left:293px;top:385px" width="14" height="13" viewBox="0 0 14 13"><path d="M0.65 10.8 V1.4 Q0.65 0.65 1.4 0.65 H5.6 L7.6 2.65 H11.9 V4.2" fill="none" stroke="#1e1e1e" stroke-width="1.3"/><path d="M0.65 10.6 Q0.65 11.55 1.6 11.55 H2.6" fill="none" stroke="#1e1e1e" stroke-width="1.3"/><rect x="2.4" y="4" width="10.4" height="7.6" rx="0.8" fill="#1e1e1e"/></svg>
<div class="t" style="left:315px;top:384px;color:#000">Listen</div>
<div class="a" style="left:300px;top:414px;width:8px;height:1px;background:repeating-linear-gradient(90deg,#a0a0a0 0 1px,transparent 1px 2px)"></div>
<svg style="left:310px;top:409px" width="13" height="13" viewBox="0 0 13 13"><rect x="0.5" y="0.5" width="12" height="12" fill="#fff" stroke="#333" stroke-width="1"/><path d="M2.4 6.4 L4.9 8.9 L10.4 3.4" fill="none" stroke="#333" stroke-width="1.3"/></svg>
<svg style="left:325px;top:407px" width="16" height="16" viewBox="0 0 16 16"><path d="M4.6 7.5 V0.65 H10.3 L13.4 3.8 V7.5" fill="#fff" stroke="#3a96d8" stroke-width="1.2"/><path d="M10.2 0.7 V3.9 H13.4" fill="none" stroke="#3a96d8" stroke-width="1.1"/><path d="M6 3.4 H8.4 M6 5.4 H11.6" stroke="#3a96d8" stroke-width="1"/><path d="M1.6 14 V4.4 Q1.6 3.4 2.6 3.4 H3.2" fill="none" stroke="#1e1e1e" stroke-width="1.1"/><path d="M6.2 7.4 H15.8 L12.6 14.7 H1.6 Z" fill="#1e1e1e"/></svg>
<div class="t" style="left:348px;top:408px;color:#000">Adresskartei A6</div>
<div class="a" style="left:300px;top:438px;width:8px;height:1px;background:repeating-linear-gradient(90deg,#a0a0a0 0 1px,transparent 1px 2px)"></div>
<svg style="left:310px;top:433px" width="13" height="13" viewBox="0 0 13 13"><rect x="0.5" y="0.5" width="12" height="12" fill="#fff" stroke="#333" stroke-width="1"/><path d="M2.4 6.4 L4.9 8.9 L10.4 3.4" fill="none" stroke="#333" stroke-width="1.3"/></svg>
<svg style="left:325px;top:431px" width="16" height="16" viewBox="0 0 16 16"><path d="M4.6 7.5 V0.65 H10.3 L13.4 3.8 V7.5" fill="#fff" stroke="#3a96d8" stroke-width="1.2"/><path d="M10.2 0.7 V3.9 H13.4" fill="none" stroke="#3a96d8" stroke-width="1.1"/><path d="M6 3.4 H8.4 M6 5.4 H11.6" stroke="#3a96d8" stroke-width="1"/><path d="M1.6 14 V4.4 Q1.6 3.4 2.6 3.4 H3.2" fill="none" stroke="#1e1e1e" stroke-width="1.1"/><path d="M6.2 7.4 H15.8 L12.6 14.7 H1.6 Z" fill="#1e1e1e"/></svg>
<div class="t" style="left:348px;top:432px;color:#000">Anwesenheitsliste</div>
<div class="a" style="left:300px;top:462px;width:8px;height:1px;background:repeating-linear-gradient(90deg,#a0a0a0 0 1px,transparent 1px 2px)"></div>
<svg style="left:310px;top:457px" width="13" height="13" viewBox="0 0 13 13"><rect x="0.5" y="0.5" width="12" height="12" fill="#fff" stroke="#333" stroke-width="1"/><path d="M2.4 6.4 L4.9 8.9 L10.4 3.4" fill="none" stroke="#333" stroke-width="1.3"/></svg>
<svg style="left:325px;top:455px" width="16" height="16" viewBox="0 0 16 16"><path d="M4.6 7.5 V0.65 H10.3 L13.4 3.8 V7.5" fill="#fff" stroke="#3a96d8" stroke-width="1.2"/><path d="M10.2 0.7 V3.9 H13.4" fill="none" stroke="#3a96d8" stroke-width="1.1"/><path d="M6 3.4 H8.4 M6 5.4 H11.6" stroke="#3a96d8" stroke-width="1"/><path d="M1.6 14 V4.4 Q1.6 3.4 2.6 3.4 H3.2" fill="none" stroke="#1e1e1e" stroke-width="1.1"/><path d="M6.2 7.4 H15.8 L12.6 14.7 H1.6 Z" fill="#1e1e1e"/></svg>
<div class="t" style="left:348px;top:456px;color:#000">Liste detailiert</div>
<div class="a" style="left:300px;top:486px;width:8px;height:1px;background:repeating-linear-gradient(90deg,#a0a0a0 0 1px,transparent 1px 2px)"></div>
<svg style="left:310px;top:481px" width="13" height="13" viewBox="0 0 13 13"><rect x="0.5" y="0.5" width="12" height="12" fill="#fff" stroke="#333" stroke-width="1"/><path d="M2.4 6.4 L4.9 8.9 L10.4 3.4" fill="none" stroke="#333" stroke-width="1.3"/></svg>
<svg style="left:325px;top:479px" width="16" height="16" viewBox="0 0 16 16"><path d="M4.6 7.5 V0.65 H10.3 L13.4 3.8 V7.5" fill="#fff" stroke="#3a96d8" stroke-width="1.2"/><path d="M10.2 0.7 V3.9 H13.4" fill="none" stroke="#3a96d8" stroke-width="1.1"/><path d="M6 3.4 H8.4 M6 5.4 H11.6" stroke="#3a96d8" stroke-width="1"/><path d="M1.6 14 V4.4 Q1.6 3.4 2.6 3.4 H3.2" fill="none" stroke="#1e1e1e" stroke-width="1.1"/><path d="M6.2 7.4 H15.8 L12.6 14.7 H1.6 Z" fill="#1e1e1e"/></svg>
<div class="t" style="left:348px;top:480px;color:#000">Liste kurz</div>
<div class="a" style="left:300px;top:510px;width:8px;height:1px;background:repeating-linear-gradient(90deg,#a0a0a0 0 1px,transparent 1px 2px)"></div>
<svg style="left:310px;top:505px" width="13" height="13" viewBox="0 0 13 13"><rect x="0.5" y="0.5" width="12" height="12" fill="#fff" stroke="#333" stroke-width="1"/><path d="M2.4 6.4 L4.9 8.9 L10.4 3.4" fill="none" stroke="#333" stroke-width="1.3"/></svg>
<svg style="left:325px;top:503px" width="16" height="16" viewBox="0 0 16 16"><path d="M4.6 7.5 V0.65 H10.3 L13.4 3.8 V7.5" fill="#fff" stroke="#3a96d8" stroke-width="1.2"/><path d="M10.2 0.7 V3.9 H13.4" fill="none" stroke="#3a96d8" stroke-width="1.1"/><path d="M6 3.4 H8.4 M6 5.4 H11.6" stroke="#3a96d8" stroke-width="1"/><path d="M1.6 14 V4.4 Q1.6 3.4 2.6 3.4 H3.2" fill="none" stroke="#1e1e1e" stroke-width="1.1"/><path d="M6.2 7.4 H15.8 L12.6 14.7 H1.6 Z" fill="#1e1e1e"/></svg>
<div class="t" style="left:348px;top:504px;color:#000">Liste kurz - mit Anrede</div>
<div class="a" style="left:300px;top:534px;width:8px;height:1px;background:repeating-linear-gradient(90deg,#a0a0a0 0 1px,transparent 1px 2px)"></div>
<svg style="left:310px;top:529px" width="13" height="13" viewBox="0 0 13 13"><rect x="0.5" y="0.5" width="12" height="12" fill="#fff" stroke="#333" stroke-width="1"/><path d="M2.4 6.4 L4.9 8.9 L10.4 3.4" fill="none" stroke="#333" stroke-width="1.3"/></svg>
<svg style="left:325px;top:527px" width="16" height="16" viewBox="0 0 16 16"><path d="M4.6 7.5 V0.65 H10.3 L13.4 3.8 V7.5" fill="#fff" stroke="#3a96d8" stroke-width="1.2"/><path d="M10.2 0.7 V3.9 H13.4" fill="none" stroke="#3a96d8" stroke-width="1.1"/><path d="M6 3.4 H8.4 M6 5.4 H11.6" stroke="#3a96d8" stroke-width="1"/><path d="M1.6 14 V4.4 Q1.6 3.4 2.6 3.4 H3.2" fill="none" stroke="#1e1e1e" stroke-width="1.1"/><path d="M6.2 7.4 H15.8 L12.6 14.7 H1.6 Z" fill="#1e1e1e"/></svg>
<div class="t" style="left:348px;top:528px;color:#000">Telefon und Fax Nummern Liste</div>
</body></html>
